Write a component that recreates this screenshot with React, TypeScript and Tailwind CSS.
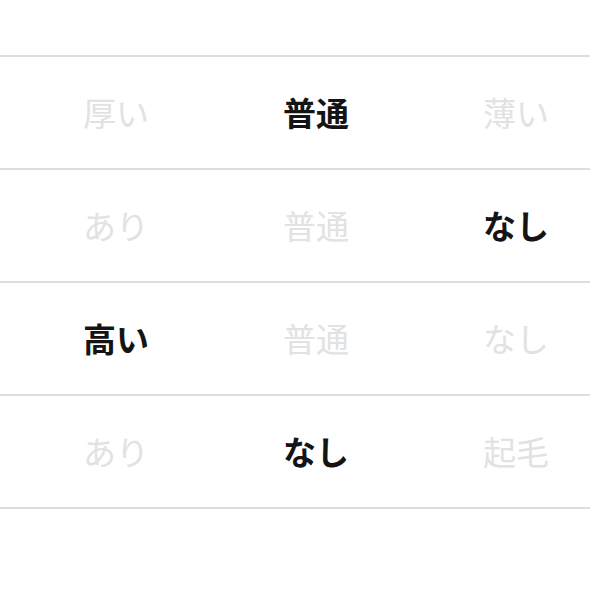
const rows: { label: string; on: boolean }[][] = [
  [
    { label: "厚い", on: false },
    { label: "普通", on: true },
    { label: "薄い", on: false },
  ],
  [
    { label: "あり", on: false },
    { label: "普通", on: false },
    { label: "なし", on: true },
  ],
  [
    { label: "高い", on: true },
    { label: "普通", on: false },
    { label: "なし", on: false },
  ],
  [
    { label: "あり", on: false },
    { label: "なし", on: true },
    { label: "起毛", on: false },
  ],
];

const App = () => {
  return (
    <div
      className="h-[590px] w-[590px] overflow-hidden bg-white pt-[55px]"
      style={{ fontFamily: '"Noto Sans CJK JP", "Noto Sans", sans-serif' }}
    >
      {rows.map((row, i) => (
        <div
          key={i}
          className="grid h-[113px] grid-cols-[200px_200px_200px] items-center border-t-2 border-[#dedede] pl-[16px]"
        >
          {row.map((item, j) => (
            <p
              key={j}
              className={`text-center text-[33px] leading-none ${
                item.on ? "font-bold text-[#141414]" : "text-[#e2e2e2]"
              }`}
            >
              {item.label}
            </p>
          ))}
        </div>
      ))}
      <div className="border-t-2 border-[#dedede]" />
    </div>
  );
};
export default App;
